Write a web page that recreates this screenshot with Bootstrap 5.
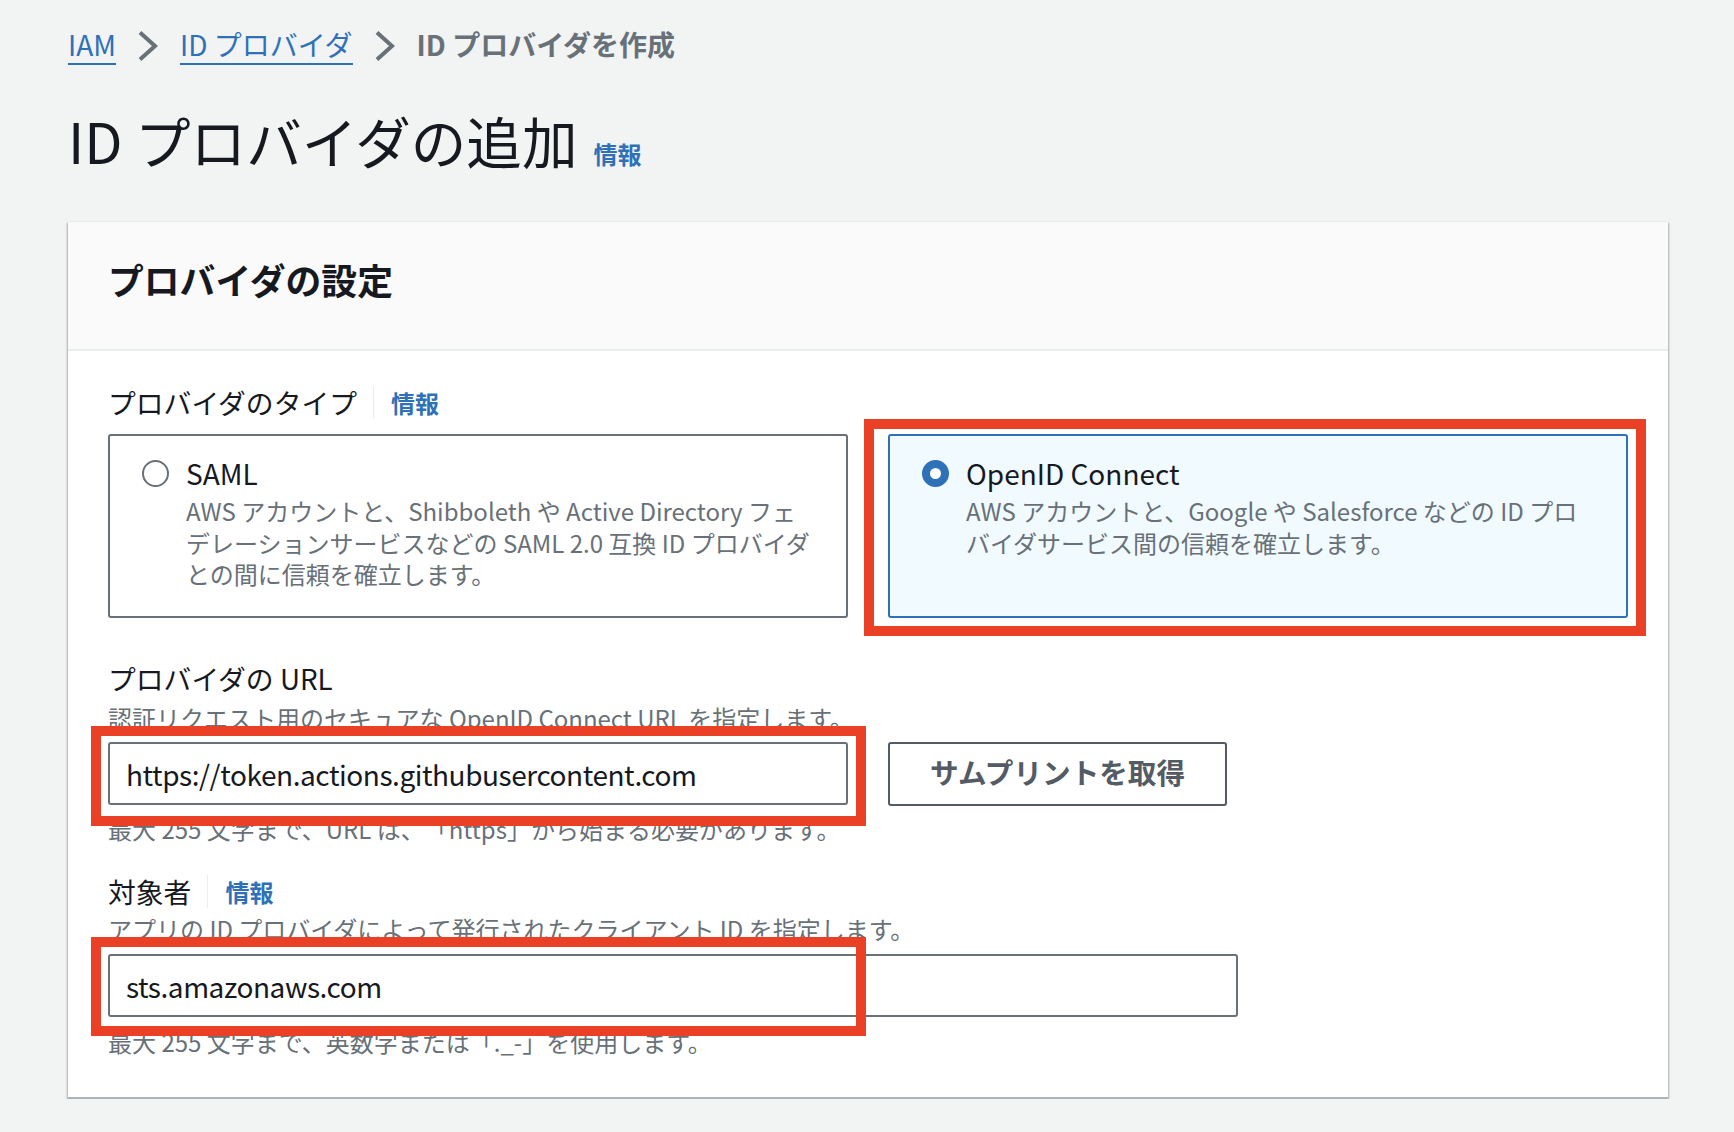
<!DOCTYPE html>
<html lang="ja">

<head>
    <meta charset="UTF-8">
    <meta name="viewport" content="width=device-width, initial-scale=1.0">
    <title>ID プロバイダの追加 - IAM</title>
    <link href="https://cdn.jsdelivr.net/npm/bootstrap@5.3.0/dist/css/bootstrap.min.css" rel="stylesheet">
    <style>
        body {
            background-color: #f2f3f3;
            color: #16191f;
            font-family: "Noto Sans CJK JP", "Noto Sans", sans-serif;
            text-spacing-trim: space-all;
            padding: 28px 66px 0 68px;
        }

        a {
            color: #2e71b8;
        }

        /* Breadcrumb */
        .breadcrumb {
            margin: 0;
            font-size: 28px;
            line-height: 32px;
            align-items: flex-start;
            gap: 22px;
        }

        .breadcrumb-item + .breadcrumb-item {
            padding-left: 0;
        }

        .breadcrumb-item + .breadcrumb-item::before {
            content: none;
        }

        .breadcrumb-item a {
            display: block;
            padding-bottom: 3px;
            text-decoration: none;
            border-bottom: 2px solid #2e71b8;
        }

        .breadcrumb-item.active {
            color: #687078;
            font-weight: 700;
        }

        .crumb-sep {
            display: block;
            width: 20px;
            height: 30px;
            margin-top: 3px;
        }

        /* Page title */
        .page-title {
            margin: 45px 0 52px;
            font-size: 55.6px;
            line-height: 60px;
            font-weight: 400;
        }

        .info-link {
            font-size: 24px;
            line-height: 1;
            font-weight: 700;
            text-decoration: none;
        }

        .page-title .info-link {
            margin-left: 16px;
        }

        /* Card */
        .settings-card {
            border: 0;
            border-bottom: 2px solid #aeb4b7;
            border-radius: 0;
            box-shadow: 0 1px 1px 0 rgba(0, 28, 36, .3), 1px 1px 2px 0 rgba(0, 28, 36, .25), -1px 1px 2px 0 rgba(0, 28, 36, .25);
        }

        .settings-card .card-header {
            height: 129px;
            padding: 35px 40px 0;
            background-color: #fafafa;
            border-bottom: 2px solid #eaeded;
            border-radius: 0;
        }

        .settings-card .card-header h2 {
            margin: 0;
            font-size: 35.8px;
            line-height: 44px;
            font-weight: 700;
        }

        .settings-card .card-body {
            padding: 34px 40px 39px;
        }

        /* Form fields */
        .field-label {
            font-size: 27.8px;
            line-height: 34px;
        }

        .label-row {
            display: flex;
            align-items: center;
            height: 34px;
        }

        .label-row .info-link {
            margin-left: 16px;
            padding-left: 17px;
            border-left: 1px solid #eaeded;
            line-height: 33px;
        }

        .field-help {
            font-size: 24px;
            line-height: 32px;
            color: #687078;
        }

        .form-control.field-input {
            height: 63px;
            padding: 0 16px;
            font-size: 28px;
            letter-spacing: -.45px;
            color: #16191f;
            border: 2px solid #687078;
            border-radius: 3px;
        }

        .btn.thumb-btn {
            width: 339px;
            height: 64px;
            padding: 0 0 3px;
            font-size: 28.6px;
            font-weight: 700;
            color: #545b64;
            background: #fff;
            border: 2px solid #545b64;
            border-radius: 3px;
        }

        /* Radio tiles */
        .tile-row {
            --bs-gutter-x: 40px;
            margin-top: 15px;
        }

        .tile {
            height: 184px;
            padding: 20px 30px 0 32px;
            border: 2px solid #687078;
            border-radius: 3px;
            background: #fff;
            display: flex;
            gap: 17px;
        }

        .tile.selected {
            border-color: #2e71b8;
            background: #f1faff;
        }

        .tile .form-check-input {
            flex: none;
            width: 27px;
            height: 27px;
            margin: 4px 0 0;
            background-color: #fff;
            background-image: none;
            border: 2px solid #687078;
        }

        .tile .form-check-input:checked {
            background-color: #fff;
            background-image: none;
            border: 8px solid #2e71b8;
        }

        .tile-title {
            font-size: 28px;
            line-height: 34px;
        }

        .tile-desc {
            margin-top: 5px;
            font-size: 24px;
            line-height: 31.7px;
            color: #687078;
        }

        /* Red annotation frames laid over the form */
        .annot-wrap {
            position: relative;
        }

        .annot {
            position: absolute;
            border: 10px solid #e94026;
            pointer-events: none;
        }

        .annot-tile {
            inset: -15px -18px -18px -24px;
        }

        .annot-url {
            inset: -16px -18px -20px -17px;
        }

        .annot-aud {
            top: -17px;
            bottom: -19px;
            left: -17px;
            width: 775px;
        }

        .mt-url-label { margin-top: 43px; }
        .mt-help { margin-top: 7px; }
        .mt-input { margin-top: 8px; }
        .mt-hint { margin-top: 7px; }
        .mt-aud-label { margin-top: 29px; }
        .mt-help-aud { margin-top: 5px; }
        .mt-input-aud { margin-top: 9px; }
        .mt-hint-aud { margin-top: 9px; }

        .url-input { width: 740px; }
        .aud-input { width: 1130px; }
        .input-gap { gap: 40px; }
    </style>
</head>

<body>
    <!-- Breadcrumb -->
    <nav aria-label="breadcrumb">
        <ol class="breadcrumb">
            <li class="breadcrumb-item"><a href="#">IAM</a></li>
            <li class="breadcrumb-item">
                <svg class="crumb-sep" viewBox="0 0 20 30" fill="none" stroke="#687078" stroke-width="4"><path d="M2 1.5 17 15 2 28.5" /></svg>
            </li>
            <li class="breadcrumb-item"><a href="#">ID プロバイダ</a></li>
            <li class="breadcrumb-item">
                <svg class="crumb-sep" viewBox="0 0 20 30" fill="none" stroke="#687078" stroke-width="4"><path d="M2 1.5 17 15 2 28.5" /></svg>
            </li>
            <li class="breadcrumb-item active" aria-current="page">ID プロバイダを作成</li>
        </ol>
    </nav>

    <h1 class="page-title">ID プロバイダの追加<a class="info-link" href="#">情報</a></h1>

    <!-- Provider settings -->
    <div class="card settings-card">
        <div class="card-header">
            <h2>プロバイダの設定</h2>
        </div>
        <div class="card-body">
            <div class="label-row">
                <span class="field-label">プロバイダのタイプ</span>
                <a class="info-link" href="#">情報</a>
            </div>

            <div class="row tile-row">
                <div class="col-6">
                    <label class="tile">
                        <input class="form-check-input" type="radio" name="providerType">
                        <span>
                            <span class="d-block tile-title">SAML</span>
                            <span class="d-block tile-desc">AWS アカウントと、Shibboleth や Active Directory フェ<br>デレーションサービスなどの SAML 2.0 互換 ID プロバイダ<br>との間に信頼を確立します。</span>
                        </span>
                    </label>
                </div>
                <div class="col-6">
                    <div class="annot-wrap">
                        <label class="tile selected">
                            <input class="form-check-input" type="radio" name="providerType" checked>
                            <span>
                                <span class="d-block tile-title">OpenID Connect</span>
                                <span class="d-block tile-desc">AWS アカウントと、Google や Salesforce などの ID プロ<br>バイダサービス間の信頼を確立します。</span>
                            </span>
                        </label>
                        <div class="annot annot-tile"></div>
                    </div>
                </div>
            </div>

            <div class="field-label mt-url-label">プロバイダの URL</div>
            <div class="field-help mt-help">認証リクエスト用のセキュアな OpenID Connect URL を指定します。</div>
            <div class="d-flex input-gap mt-input">
                <div class="annot-wrap url-input">
                    <input class="form-control field-input" type="text" value="https://token.actions.githubusercontent.com">
                    <div class="annot annot-url"></div>
                </div>
                <button class="btn thumb-btn" type="button">サムプリントを取得</button>
            </div>
            <div class="field-help mt-hint">最大 255 文字まで、URL は、「https」から始まる必要があります。</div>

            <div class="label-row mt-aud-label">
                <span class="field-label">対象者</span>
                <a class="info-link" href="#">情報</a>
            </div>
            <div class="field-help mt-help-aud">アプリの ID プロバイダによって発行されたクライアント ID を指定します。</div>
            <div class="annot-wrap aud-input mt-input-aud">
                <input class="form-control field-input" type="text" value="sts.amazonaws.com">
                <div class="annot annot-aud"></div>
            </div>
            <div class="field-help mt-hint-aud">最大 255 文字まで、英数字または「._-」を使用します。</div>
        </div>
    </div>

    <script src="https://cdn.jsdelivr.net/npm/bootstrap@5.3.0/dist/js/bootstrap.bundle.min.js"></script>
</body>

</html>
